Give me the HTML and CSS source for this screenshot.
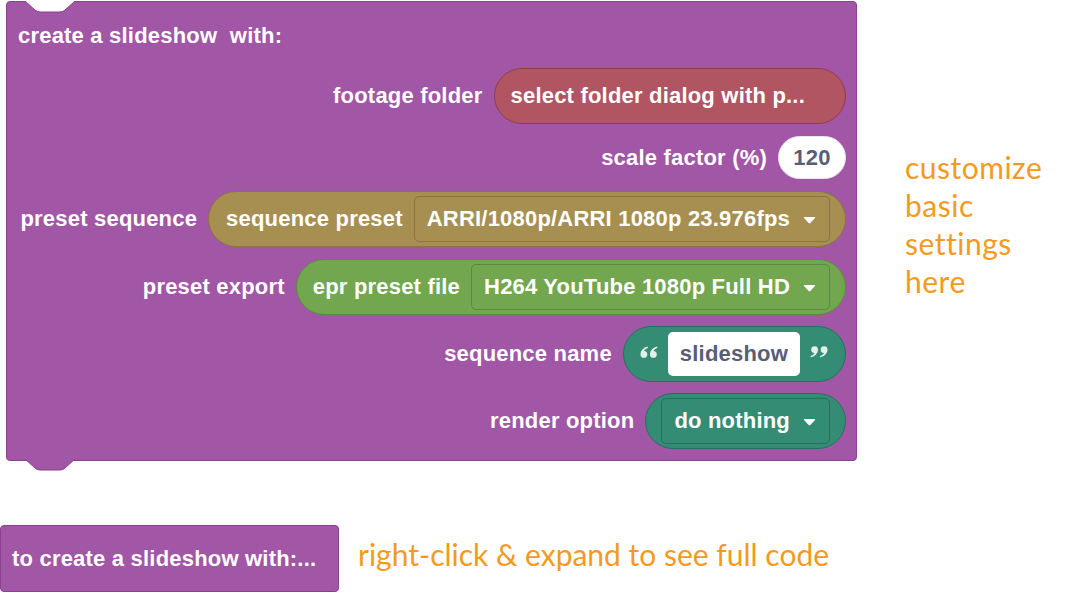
FILE: index.html
```html
<!DOCTYPE html>
<html>
<head>
<meta charset="utf-8">
<link rel="stylesheet" href="styles.css">
</head>
<body>
<div class="canvas">
  <div class="top">
    <div class="block main">
      <svg class="notch" width="50" height="13" viewBox="0 0 50 13"><path d="M0,0 L10,9 Q12,11 15,11 L35,11 Q38,11 40,9 L50,0 Z" fill="#fff"/><path d="M0,0 L10,9 Q12,11 15,11 L35,11 Q38,11 40,9 L50,0" fill="none" stroke="#8a3f8f" stroke-width="1"/></svg>
      <div class="title">create a slideshow&nbsp; with:</div>
      <div class="row">
        <span class="label">footage folder</span>
        <div class="pill red">select folder dialog with p...</div>
      </div>
      <div class="row">
        <span class="label">scale factor (%)</span>
        <div class="num">120</div>
      </div>
      <div class="row">
        <span class="label">preset sequence</span>
        <div class="pill olive"><span>sequence preset</span>
          <div class="drop">ARRI/1080p/ARRI 1080p 23.976fps<svg class="arrow" width="13" height="8" viewBox="0 0 13 8"><path d="M1.5,1 L11.5,1 Q12.6,1 12,2 L7.3,7 Q6.5,7.8 5.7,7 L1,2 Q0.4,1 1.5,1 Z" fill="#fff"/></svg></div>
        </div>
      </div>
      <div class="row">
        <span class="label">preset export</span>
        <div class="pill green"><span>epr preset file</span>
          <div class="drop">H264 YouTube 1080p Full HD<svg class="arrow" width="13" height="8" viewBox="0 0 13 8"><path d="M1.5,1 L11.5,1 Q12.6,1 12,2 L7.3,7 Q6.5,7.8 5.7,7 L1,2 Q0.4,1 1.5,1 Z" fill="#fff"/></svg></div>
        </div>
      </div>
      <div class="row tight">
        <span class="label">sequence name</span>
        <div class="pill teal text">
          <svg class="quote" width="18" height="12" viewBox="0 0 18 12"><g fill="#e3efe9"><path id="mk" d="M7.6,0.6 C3.6,1.6 0.5,4.6 0.5,8.4 A3.4,3.4 0 1 0 4,5 C4.8,3.6 6,2.7 7.9,2.1 Z"/><path d="M17.1,0.6 C13.1,1.6 10,4.6 10,8.4 A3.4,3.4 0 1 0 13.5,5 C14.3,3.6 15.5,2.7 17.4,2.1 Z"/></g></svg>
          <div class="field">slideshow</div>
          <svg class="quote" width="18" height="12" viewBox="0 0 18 12"><g fill="#e3efe9" transform="rotate(180 9 6)"><path d="M7.6,0.6 C3.6,1.6 0.5,4.6 0.5,8.4 A3.4,3.4 0 1 0 4,5 C4.8,3.6 6,2.7 7.9,2.1 Z"/><path d="M17.1,0.6 C13.1,1.6 10,4.6 10,8.4 A3.4,3.4 0 1 0 13.5,5 C14.3,3.6 15.5,2.7 17.4,2.1 Z"/></g></svg>
        </div>
      </div>
      <div class="row tight">
        <span class="label">render option</span>
        <div class="pill teal render">
          <div class="drop">do nothing<svg class="arrow" width="13" height="8" viewBox="0 0 13 8"><path d="M1.5,1 L11.5,1 Q12.6,1 12,2 L7.3,7 Q6.5,7.8 5.7,7 L1,2 Q0.4,1 1.5,1 Z" fill="#fff"/></svg></div>
        </div>
      </div>
      <svg class="tab" width="50" height="13" viewBox="0 0 50 13"><path d="M0,0 L10,9 Q12,11 15,11 L35,11 Q38,11 40,9 L50,0 Z" fill="#a156a6"/><path d="M0,0 L10,9 Q12,11 15,11 L35,11 Q38,11 40,9 L50,0" fill="none" stroke="#8a3f8f" stroke-width="1"/></svg>
    </div>
    <div class="note side">customize<br>basic<br>settings<br>here</div>
  </div>
  <div class="bottom">
    <div class="block collapsed">to create a slideshow with:...</div>
    <div class="note hint">right-click &amp; expand to see full code</div>
  </div>
</div>
</body>
</html>
```
FILE: styles.css
```css
html, body {
  margin: 0;
  padding: 0;
  background: #ffffff;
}

.canvas {
  width: 1069px;
  height: 604px;
  font-family: "Liberation Sans", Arial, Helvetica, sans-serif;
  font-weight: bold;
  font-size: 22px;
  letter-spacing: 0.2px;
  color: #ffffff;
}

.top {
  display: flex;
  align-items: flex-start;
  padding-top: 1px;
}

.block {
  background: #a156a6;
  border: 1px solid #8a3f8f;
  border-radius: 4px;
  box-sizing: border-box;
  position: relative;
}

.main {
  width: 851px;
  margin-left: 6px;
  padding: 12px 10px 11px 11px;
}

.notch {
  position: absolute;
  left: 18px;
  top: -1px;
}

.tab {
  position: absolute;
  left: 18px;
  bottom: -12px;
}

.title {
  height: 42px;
  display: flex;
  align-items: center;
  white-space: pre;
  padding-top: 1px;
  box-sizing: border-box;
}

.row {
  display: flex;
  justify-content: flex-end;
  align-items: center;
  gap: 11px;
  margin-top: 12px;
}

.row.tight {
  margin-top: 11px;
}

.label {
  white-space: nowrap;
}

.pill {
  height: 56px;
  box-sizing: border-box;
  border-radius: 28px;
  border: 1px solid;
  display: flex;
  align-items: center;
  white-space: nowrap;
}

.red {
  background: #b15562;
  border-color: #8f3e4c;
  padding: 0 40px 0 16px;
}

.olive {
  background: #a78f51;
  border-color: #8a7440;
  padding: 0 15px 0 17px;
  gap: 11px;
}

.green {
  background: #72a74f;
  border-color: #5a8a3d;
  padding: 0 15px 0 16px;
  gap: 11px;
}

.teal {
  background: #348c74;
  border-color: #27705c;
}

.olive .drop { border-color: #8a7440; }
.green .drop { border-color: #5a8a3d; }
.teal .drop { border-color: #27705c; }

.drop {
  height: 46px;
  box-sizing: border-box;
  border: 1px solid;
  border-radius: 5px;
  display: flex;
  align-items: center;
  padding: 0 13px 0 12px;
  gap: 13px;
}

.arrow {
  display: block;
  margin-top: 1px;
}

.num {
  height: 43px;
  width: 68px;
  box-sizing: border-box;
  border-radius: 22px;
  background: #ffffff;
  border: 1px solid #e9e3ea;
  color: #575e75;
  display: flex;
  align-items: center;
  justify-content: center;
}

.text {
  padding: 0 17px 0 16px;
  gap: 10px;
}

.quote {
  display: block;
  margin-top: -4px;
}

.field {
  height: 44px;
  box-sizing: border-box;
  background: #ffffff;
  border-radius: 5px;
  color: #575e75;
  display: flex;
  align-items: center;
  padding: 0 12px;
}

.render {
  padding: 0 15px 0 15px;
}

.note {
  font-family: Lato, "Noto Sans", sans-serif;
  font-weight: 400;
  letter-spacing: 0;
  color: #f39a1f;
}

.side {
  margin-left: 48px;
  margin-top: 147px;
  font-size: 30px;
  letter-spacing: 0.5px;
  line-height: 38px;
}

.bottom {
  display: flex;
  align-items: center;
  margin-top: 64px;
}

.collapsed {
  width: 339px;
  height: 67px;
  padding-left: 11px;
  display: flex;
  align-items: center;
  white-space: nowrap;
}

.hint {
  margin-left: 19px;
  font-size: 30px;
  padding-bottom: 10px;
}
```
